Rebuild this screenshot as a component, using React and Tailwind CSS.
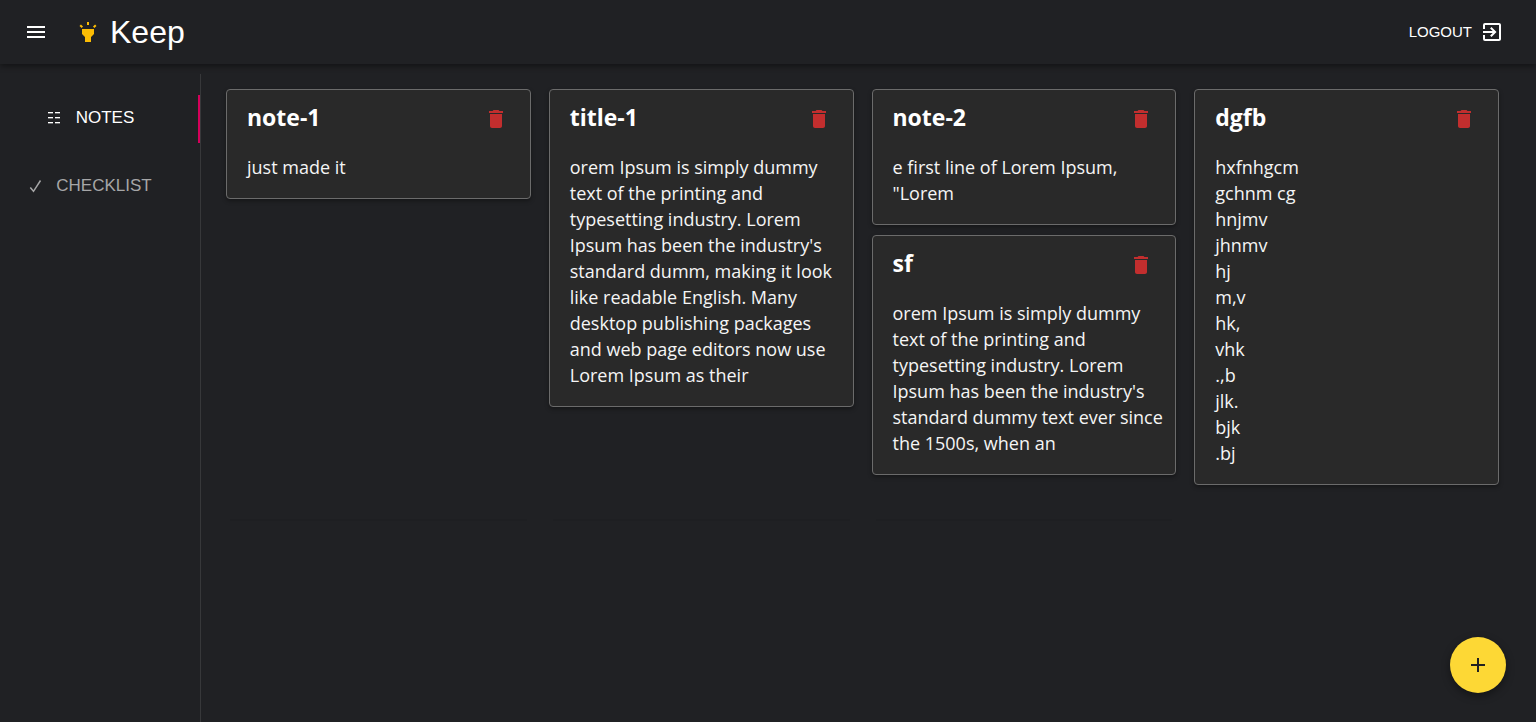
import { MdMenu, MdDelete, MdExitToApp, MdHighlight } from "react-icons/md";

const columns = [
  [{ title: "note-1", body: "just made it" }],
  [
    {
      title: "title-1",
      body: "orem Ipsum is simply dummy text of the printing and typesetting industry. Lorem Ipsum has been the industry's standard dumm, making it look like readable English. Many desktop publishing packages and web page editors now use Lorem Ipsum as their",
    },
  ],
  [
    { title: "note-2", body: 'e first line of Lorem Ipsum, "Lorem' },
    {
      title: "sf",
      body: "orem Ipsum is simply dummy text of the printing and typesetting industry. Lorem Ipsum has been the industry's standard dummy text ever since the 1500s, when an",
    },
  ],
  [
    {
      title: "dgfb",
      body: "hxfnhgcm\ngchnm cg\nhnjmv\njhnmv\nhj\nm,v\nhk,\nvhk\n.,b\njlk.\nbjk\n.bj",
    },
  ],
];

function NoteCard({ title, body }) {
  return (
    <article className="rounded border border-[#6b6b6b] bg-[#292929] pt-[7px] pr-2 pb-4 pl-5 shadow-[0_2px_4px_rgba(0,0,0,0.35)]">
      <header className="flex h-10 items-center justify-between pr-2.5">
        <h2 className="text-[23px] leading-8 font-bold text-white">{title}</h2>
        <button type="button" aria-label={`Delete ${title}`} className="mt-1 flex size-8 items-center justify-center text-[#c22e2e]">
          <MdDelete size={24} />
        </button>
      </header>
      <p className="mt-[17px] pb-0.5 text-lg leading-[26px] whitespace-pre-line text-[#f5f5f5]">{body}</p>
    </article>
  );
}

export default function App() {
  return (
    <div className="flex min-h-screen flex-col bg-[#202124] font-['Liberation_Sans',Arial,sans-serif] text-white">
      <header className="z-10 flex h-16 items-center justify-between px-6 shadow-[0_2px_6px_rgba(0,0,0,0.45)]">
        <div className="flex items-center">
          <button type="button" aria-label="Menu" className="flex size-6 items-center justify-center">
            <MdMenu size={24} />
          </button>
          <a href="#home" className="ml-7 flex items-center gap-2.5">
            <MdHighlight size={24} className="text-[#fbbc04]" />
            <span className="text-[32px] leading-10">Keep</span>
          </a>
        </div>
        <button type="button" className="flex items-center gap-2 pr-2 text-[15px] leading-6">
          LOGOUT
          <MdExitToApp size={24} />
        </button>
      </header>
      <div className="flex flex-1 pt-2.5">
        <nav className="flex w-[201px] shrink-0 flex-col gap-5 border-r border-[#37383a] pt-[21px] text-[17px]">
          <a href="#notes" className="flex h-12 items-center justify-center gap-4 border-r-2 border-[#d5005a] pr-4 pb-0.5">
            <svg viewBox="0 0 12 12" className="size-3 fill-current" shapeRendering="crispEdges" aria-hidden="true">
              <path d="M0 0h5v1H0zM7 0h5v1H7zM0 5h5v1H0zM7 5h5v1H7zM0 10h5v1H0zM7 10h5v1H7z" />
              <path d="M0 1h5v1H0zM7 1h5v1H7zM0 6h5v1H0zM7 6h5v1H7zM0 11h5v1H0zM7 11h5v1H7z" opacity="0.35" />
            </svg>
            NOTES
          </a>
          <a href="#checklist" className="flex h-12 items-center justify-center gap-4 pr-5 pb-0.5 text-[#a6a6a7]">
            <svg viewBox="0 0 12 12" className="size-3 overflow-visible fill-none stroke-current" aria-hidden="true">
              <path d="M2.300 7.500L5.500 11.300L12.500 0.500" strokeWidth="1.5" />
            </svg>
            CHECKLIST
          </a>
        </nav>
        <main className="grid flex-1 grid-cols-4 content-start items-start gap-[18px] pt-[15px] pr-[37px] pl-[25px] font-['Open_Sans','Noto_Sans',sans-serif]">
          {columns.map((notes, i) => (
            <div key={i} className="flex flex-col gap-2.5">
              {notes.map((note) => (
                <NoteCard key={note.title} {...note} />
              ))}
            </div>
          ))}
          {[0, 1, 2].map((i) => (
            <div key={i} aria-hidden="true" className="mx-1 mt-4 h-0.5 bg-[#1e1f22]" />
          ))}
        </main>
      </div>
      <button
        type="button"
        aria-label="Add note"
        className="fixed right-[30px] bottom-[29px] flex size-14 items-center justify-center rounded-full bg-[#fdd835] text-[#212121] shadow-[0_3px_8px_rgba(0,0,0,0.4)]"
      >
        <svg viewBox="0 0 14 14" className="size-3.5 stroke-current" aria-hidden="true">
          <path d="M7 0v14M0 7h14" strokeWidth="2" />
        </svg>
      </button>
    </div>
  );
}
